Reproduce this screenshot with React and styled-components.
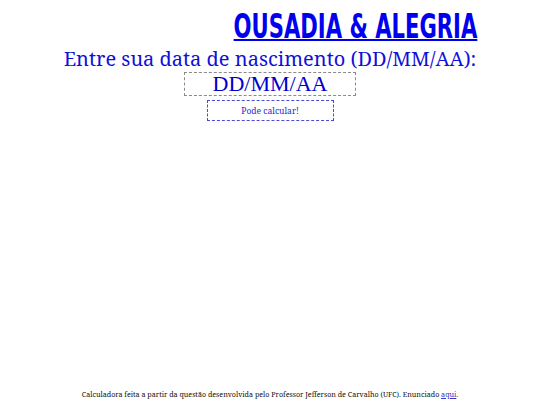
import React from "react";
import styled, { createGlobalStyle } from "styled-components";

const Global = createGlobalStyle`
  html, body { margin: 0; padding: 0; background: #fff; }
  body { font-family: "Noto Serif", "DejaVu Serif", serif; }
`;

const Page = styled.div`
  min-height: 100vh;
  display: flex;
  flex-direction: column;
  align-items: center;
  box-sizing: border-box;
  padding: 8px 0 6px;
`;

const Header = styled.header`
  align-self: stretch;
  display: flex;
  justify-content: flex-end;
  padding-right: 63px;
`;

const Title = styled.a`
  display: inline-block;
  font-family: "Liberation Sans Narrow", "DejaVu Sans Condensed", sans-serif;
  font-weight: 700;
  font-size: 33px;
  line-height: 38px;
  color: #0000ee;
  text-decoration: underline;
  text-decoration-thickness: 2px;
  transform: scaleX(0.712);
  transform-origin: right center;
  white-space: nowrap;
`;

const Prompt = styled.p`
  margin: 1px 0 0;
  font-size: 20px;
  line-height: 24px;
  color: #1010d8;
`;

const DateInput = styled.input`
  box-sizing: border-box;
  width: 172px;
  height: 24px;
  margin-top: 1px;
  border: 1px dashed #8a8a8a;
  font-family: "Liberation Serif", serif;
  font-size: 22px;
  text-align: center;
  color: #0000cd;
  background: #fff;
  padding: 0;
  &::placeholder { color: #0000cd; opacity: 1; }
  &:focus { outline: none; }
`;

const Button = styled.button`
  box-sizing: border-box;
  margin-top: 4px;
  width: 127px;
  height: 21px;
  border: 1px dashed #4b4bd6;
  background: #fff;
  color: #2a2ad0;
  font-family: "Noto Serif", "DejaVu Serif", serif;
  font-size: 8.5px;
  padding: 0;
  cursor: pointer;
`;

const Footer = styled.footer`
  margin-top: auto;
  font-size: 7.15px;
  color: #111;
`;

const FooterLink = styled.a`
  color: #3333cc;
`;

export default function App() {
  return (
    <>
      <Global />
      <Page>
        <Header>
          <Title href="#">OUSADIA &amp; ALEGRIA</Title>
        </Header>
        <Prompt>Entre sua data de nascimento (DD/MM/AA):</Prompt>
        <DateInput placeholder="DD/MM/AA" />
        <Button>Pode calcular!</Button>
        <Footer>
          Calculadora feita a partir da questão desenvolvida pelo Professor Jefferson de Carvalho (UFC). Enunciado{" "}
          <FooterLink href="#">aqui</FooterLink>.
        </Footer>
      </Page>
    </>
  );
}
